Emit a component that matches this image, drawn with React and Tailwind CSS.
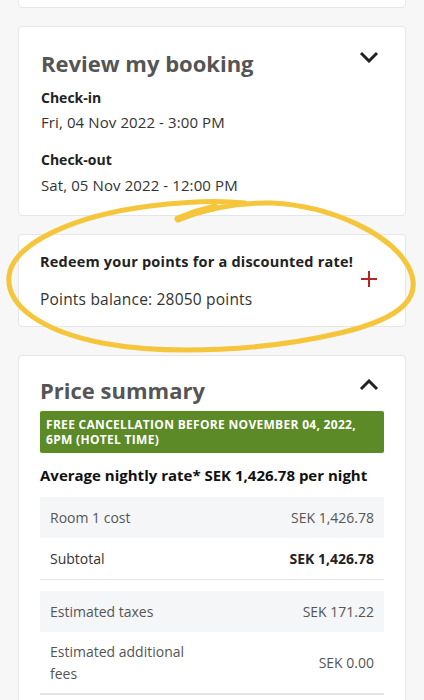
export default function App() {
  const font = { fontFamily: '"Open Sans", "Liberation Sans", sans-serif' }
  return (
    <div className="relative min-h-[700px] h-[700px] overflow-hidden bg-[#f7f7f7] px-[18px]" style={font}>
      {/* previous card, cut off at top */}
      <div className="h-[9px] -mt-px bg-white border border-[#e6e6e6] rounded-b-[4px]" />

      {/* Review my booking */}
      <div className="mt-[18px] bg-white border border-[#e6e6e6] rounded-[4px] pl-[22px] pr-[26px] pt-[21px] pb-[20px]">
        <div className="flex items-start justify-between">
          <h2 className="text-[22px] leading-[30px] font-bold text-[#555]">Review my booking</h2>
          <svg width="20" height="12" viewBox="0 0 20 12" className="mt-[3px]">
            <path d="M2 2 L10 10 L18 2" fill="none" stroke="#222" strokeWidth="3" />
          </svg>
        </div>
        <div className="mt-[10px] text-[14px] leading-[20px] font-bold text-[#222]">Check-in</div>
        <div className="mt-[4px] text-[15px] leading-[20px] tracking-[0.1px] text-[#333]">Fri, 04 Nov 2022 - 3:00 PM</div>
        <div className="mt-[18px] text-[14px] leading-[20px] font-bold text-[#222]">Check-out</div>
        <div className="mt-[5px] text-[15px] leading-[20px] tracking-[0.1px] text-[#333]">Sat, 05 Nov 2022 - 12:00 PM</div>
      </div>

      {/* Redeem points */}
      <div className="mt-[18px] bg-white border border-[#e6e6e6] rounded-[4px] pl-[21px] pr-[27px] pt-[16px] pb-[16px] flex items-center justify-between">
        <div>
          <div className="text-[14.5px] leading-[22px] font-bold tracking-[0.2px] text-[#222]">Redeem your points for a discounted rate!</div>
          <div className="mt-[15px] text-[15.5px] leading-[22px] tracking-[0.2px] text-[#333]">Points balance: 28050 points</div>
        </div>
        <svg width="18" height="18" viewBox="0 0 18 18" className="-mt-[4px]">
          <path d="M9 1 V17 M1 9 H17" fill="none" stroke="#b3261e" strokeWidth="2" />
        </svg>
      </div>

      {/* Price summary */}
      <div className="mt-[28px] bg-white border border-[#e6e6e6] rounded-[4px] px-[21px] pt-[19px] pb-[20px]">
        <div className="flex items-start justify-between">
          <h2 className="text-[22px] leading-[30px] font-bold text-[#555]">Price summary</h2>
          <svg width="20" height="12" viewBox="0 0 20 12" className="mt-[4px] mr-[5px]">
            <path d="M2 10 L10 2 L18 10" fill="none" stroke="#222" strokeWidth="3" />
          </svg>
        </div>
        <div className="mt-[6px] bg-[#5b8a26] rounded-[2px] px-[6px] py-[6px] text-[12px] leading-[15px] font-bold text-white uppercase tracking-[0.3px]">
          Free cancellation before November 04, 2022, 6PM (Hotel time)
        </div>
        <div className="mt-[11px] text-[15px] leading-[22px] font-bold text-[#111]">
          Average nightly rate* SEK 1,426.78 per night
        </div>
        <div className="mt-[11px] text-[14px] text-[#555]">
          <div className="h-[41px] bg-[#f5f6f8] flex items-center justify-between px-[10px]">
            <span>Room 1 cost</span>
            <span>SEK 1,426.78</span>
          </div>
          <div className="h-[42px] border-b border-[#e3e3e3] flex items-center justify-between px-[10px]">
            <span className="text-[#333]">Subtotal</span>
            <span className="font-bold text-[#222]">SEK 1,426.78</span>
          </div>
          <div className="mt-[11px] h-[41px] bg-[#f5f6f8] flex items-center justify-between px-[10px]">
            <span>Estimated taxes</span>
            <span>SEK 171.22</span>
          </div>
          <div className="h-[63px] border-b-2 border-[#e3e3e3] flex items-center justify-between px-[10px]">
            <span className="w-[150px] leading-[22px]">Estimated additional fees</span>
            <span>SEK 0.00</span>
          </div>
        </div>
      </div>

      {/* hand-drawn highlight */}
      <svg className="absolute inset-0 pointer-events-none" width="424" height="700" viewBox="0 0 424 700">
        <path
          d="M178 219 C200 211 232 202 272 203 C332 206 390 234 408 266 C424 296 404 318 340 333 C268 350 172 356 102 343 C42 331 6 306 9 276 C13 242 78 215 150 206 C190 201 218 200 245 203"
          fill="none"
          stroke="#f5c63c"
          strokeWidth="5"
          strokeLinecap="round"
        />
        <path d="M178 219 C190 214 202 210 215 207" fill="none" stroke="#f5c63c" strokeWidth="7" strokeLinecap="round" />
      </svg>
    </div>
  )
}
